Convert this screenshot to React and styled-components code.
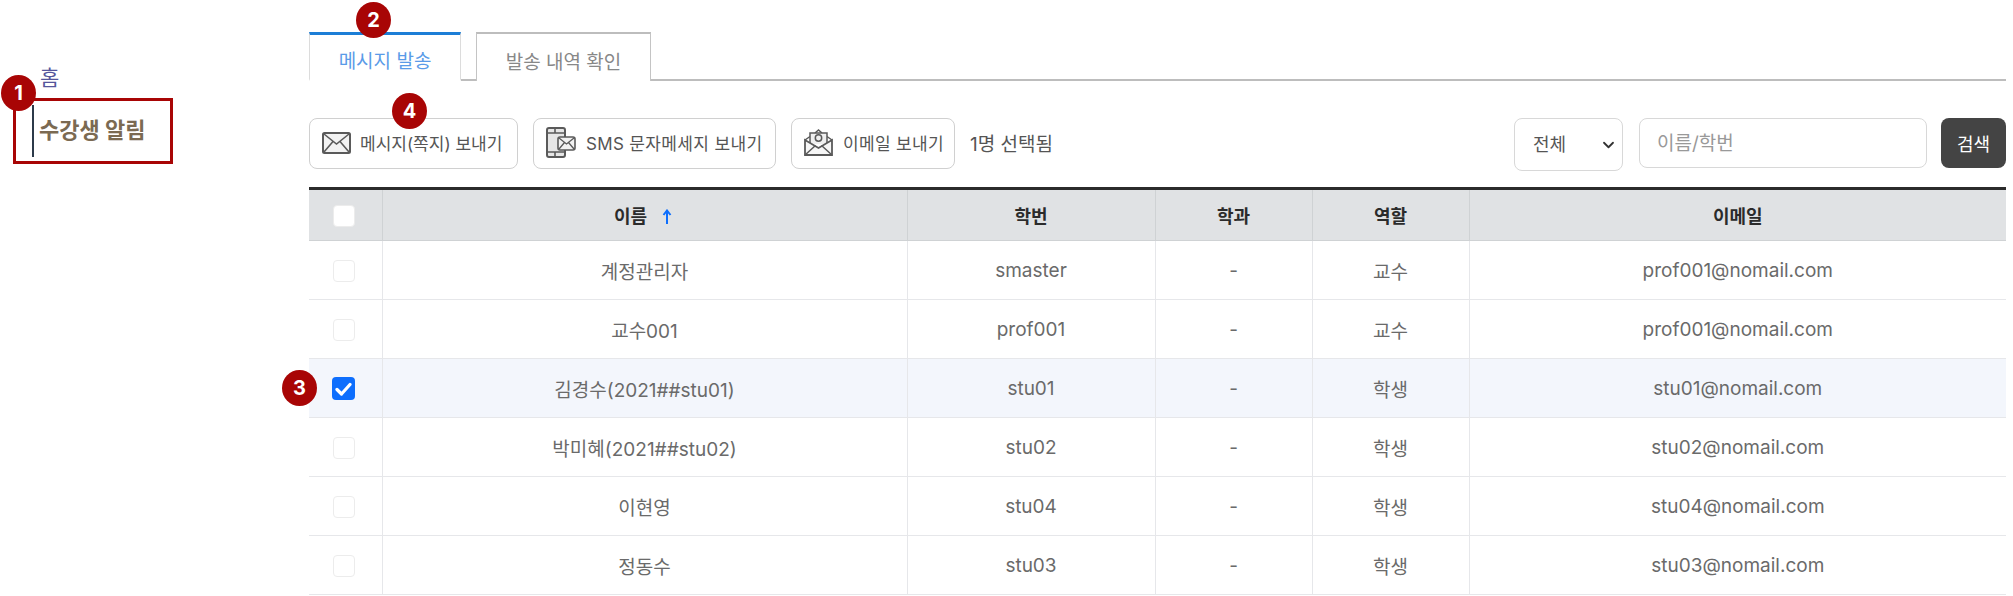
import React from 'react';
import styled, { createGlobalStyle } from 'styled-components';

const GlobalStyle = createGlobalStyle`
  html, body {
    margin: 0;
    padding: 0;
    background: #fff;
    overflow: hidden;
  }
  * { box-sizing: border-box; }
  body {
    font-family: Inter, 'Noto Sans CJK KR', sans-serif;
    color: #666;
  }
`;

const Page = styled.div`
  display: flex;
  width: 2013px;
  height: 596px;
  overflow: hidden;
`;

// Left navigation
const Sidebar = styled.nav`
  position: relative;
  width: 309px;
  flex: none;
  padding: 62px 0 0 13px;
`;

const HomeLink = styled.a`
  display: block;
  height: 36px;
  margin-left: 27px;
  font-size: 21px;
  line-height: 32px;
  color: #55559b;
`;

const ActiveItem = styled.div`
  display: flex;
  align-items: center;
  width: 160px;
  height: 66px;
  padding: 4px 0 4px 16px;
  border: 3px solid #a80505;
`;

const ActiveLabel = styled.span`
  display: block;
  height: 100%;
  padding-left: 5px;
  border-left: 2px solid #2c3a4a;
  font-size: 22px;
  font-weight: 700;
  line-height: 50px;
  color: #7b6a52;
  white-space: nowrap;
`;

const Badge = styled.span`
  position: absolute;
  left: ${p => p.$x}px;
  top: ${p => p.$y}px;
  z-index: 2;
  display: flex;
  align-items: center;
  justify-content: center;
  width: 35px;
  height: 36px;
  border-radius: 50%;
  background: #a80505;
  color: #fff;
  font-size: 20px;
  font-weight: 700;
`;

// Main column
const Main = styled.main`
  position: relative;
  flex: 1;
  min-width: 0;
  padding: 32px 7px 0 0;
`;

const Tabs = styled.div`
  display: flex;
  gap: 15px;
  height: 49px;
  border-bottom: 2px solid #bdbdbd;
`;

const Tab = styled.button`
  width: ${p => p.$width}px;
  height: 49px;
  padding: 5px 0 0;
  border: 1px solid ${p => (p.$active ? '#dcdcdc' : '#c4c4c4')};
  border-top: ${p => (p.$active ? '3px solid #1c7ed6' : '2px solid #bdbdbd')};
  border-bottom: ${p => (p.$active ? '2px solid #fff' : 'none')};
  background: #fff;
  font-family: inherit;
  font-size: 19px;
  color: ${p => (p.$active ? '#5a9be8' : '#888')};
`;

const Toolbar = styled.div`
  display: flex;
  align-items: flex-start;
  height: 53px;
  margin-top: 37px;
`;

const ToolButton = styled.button`
  display: flex;
  align-items: center;
  gap: ${p => p.$gap}px;
  width: ${p => p.$width}px;
  height: 51px;
  margin-right: 15px;
  padding: 0 0 2px ${p => p.$pad}px;
  border: 1px solid #d0d0d0;
  border-radius: 8px;
  background: #fff;
  font-family: inherit;
  font-size: 17px;
  letter-spacing: ${p => p.$tracking || 0}px;
  color: #555;
  white-space: nowrap;
`;

const SelectedCount = styled.span`
  font-size: 19px;
  line-height: 54px;
  color: #555;
`;

const SearchGroup = styled.div`
  display: flex;
  align-items: flex-start;
  margin-left: auto;
`;

const FilterSelect = styled.select`
  width: 109px;
  height: 53px;
  padding: 0 0 0 18px;
  border: 1px solid #d8d8d8;
  border-radius: 8px;
  appearance: none;
  background: #fff url("data:image/svg+xml,%3csvg xmlns='http://www.w3.org/2000/svg' viewBox='0 0 16 16'%3e%3cpath fill='none' stroke='%23333' stroke-linecap='round' stroke-linejoin='round' stroke-width='2.400' d='M2 5l6 6 6-6'/%3e%3c/svg%3e") no-repeat right 7px center / 13px 12px;
  font-family: inherit;
  font-size: 18px;
  color: #555;
`;

const SearchInput = styled.input`
  width: 288px;
  height: 50px;
  margin-left: 16px;
  padding: 0 17px;
  border: 1px solid #d8d8d8;
  border-radius: 8px;
  font-family: inherit;
  font-size: 19px;
  color: #555;
  &::placeholder { color: #999; }
`;

const SearchButton = styled.button`
  width: 65px;
  height: 50px;
  margin-left: 14px;
  padding: 0;
  border: none;
  border-radius: 8px;
  background: #444;
  color: #fff;
  font-family: inherit;
  font-size: 18px;
`;

const Table = styled.table`
  width: 1697px;
  margin-top: 16px;
  border-collapse: collapse;
  table-layout: fixed;
  border-top: 3px solid #2b2b2b;
`;

const HeadCell = styled.th`
  height: 52px;
  padding: 0;
  border-left: 1px solid #cfd2d4;
  border-bottom: 1px solid #cfd2d4;
  background: #e0e2e4;
  font-size: 18px;
  font-weight: 700;
  color: #2b2b2b;
  text-align: center;
  &:first-child { border-left: none; padding-right: 3px; }
`;

const Row = styled.tr`
  background: ${p => (p.$selected ? '#f3f6fc' : '#fff')};
`;

const Cell = styled.td`
  height: 59px;
  padding: 0;
  border-left: 1px solid #e6e7ea;
  border-bottom: 1px solid #e6e7ea;
  font-size: 19px;
  color: #6a6a6a;
  text-align: center;
  &:first-child { border-left: none; padding-right: 3px; }
`;

const CheckBox = styled.span`
  display: inline-flex;
  align-items: center;
  justify-content: center;
  vertical-align: middle;
  width: ${p => (p.$checked ? 23 : 22)}px;
  height: ${p => (p.$checked ? 23 : 22)}px;
  border: ${p => (p.$checked ? 'none' : '1px solid #ececec')};
  border-radius: 4px;
  background: ${p => (p.$checked ? '#0d6efd' : '#fff')};
`;

const SortArrow = styled.svg`
  width: 10px;
  height: 16px;
  margin: 0 3px 0 15px;
  vertical-align: -2px;
`;

const columns = [73, 525, 248, 157, 157, 537];

const users = [
  { name: '계정관리자', id: 'smaster', role: '교수', email: 'prof001@nomail.com' },
  { name: '교수001', id: 'prof001', role: '교수', email: 'prof001@nomail.com' },
  { name: '김경수(2021##stu01)', id: 'stu01', role: '학생', email: 'stu01@nomail.com', selected: true },
  { name: '박미혜(2021##stu02)', id: 'stu02', role: '학생', email: 'stu02@nomail.com' },
  { name: '이현영', id: 'stu04', role: '학생', email: 'stu04@nomail.com' },
  { name: '정동수', id: 'stu03', role: '학생', email: 'stu03@nomail.com' },
];

const MailIcon = () => (
  <svg width="29" height="22" viewBox="0 0 29 22" fill="#f2f2f2" stroke="#5a5a5a" strokeWidth="1.6">
    <rect x="1" y="1" width="27" height="20" rx="1.5" strokeWidth="2" />
    <path d="M2 2l12.5 10L27 2M2 20l9-10.5M27 20l-9-10.5" fill="none" />
  </svg>
);

const PhoneIcon = () => (
  <svg width="30" height="31" viewBox="0 0 30 31" fill="none" stroke="#5a5a5a">
    <rect x="1" y="1" width="18" height="29" rx="2" fill="#e6e6e6" strokeWidth="2" />
    <path d="M1 6h18M1 25h18M9 1.500v4M9 25v5" strokeWidth="1.6" />
    <rect x="12" y="10" width="17" height="13" rx="2" fill="#f2f2f2" strokeWidth="1.6" />
    <path d="M13 11l7.500 6 7.500-6M13 22l5.500-6.500M28 22l-5.500-6.500" strokeWidth="1.3" />
  </svg>
);

const OpenMailIcon = () => (
  <svg width="29" height="27" viewBox="0 0 29 27" fill="none" stroke="#5a5a5a">
    <path d="M1 11l5-3.500M28 11l-5-3.500M11 4l3.500-3 3.500 3" strokeWidth="1.5" />
    <path d="M6 15V4h17v11" fill="#f0f0f0" strokeWidth="1.5" />
    <circle cx="14.500" cy="9" r="3.200" strokeWidth="1.500" />
    <path d="M1 11v15h27V11L14.500 19z" fill="#f7f7f7" strokeWidth="1.800" />
    <path d="M1 26l10.500-9.500M28 26l-10.500-9.500" strokeWidth="1.500" />
  </svg>
);

const App = () => (
  <Page>
    <GlobalStyle />
    <Sidebar>
      <Badge $x={1} $y={75}>1</Badge>
      <HomeLink>홈</HomeLink>
      <ActiveItem>
        <ActiveLabel>수강생 알림</ActiveLabel>
      </ActiveItem>
    </Sidebar>

    <Main>
      <Badge $x={47} $y={2}>2</Badge>
      <Badge $x={83} $y={93}>4</Badge>
      <Badge $x={-27} $y={370}>3</Badge>

      <Tabs>
        <Tab $active $width={152}>메시지 발송</Tab>
        <Tab $width={175}>발송 내역 확인</Tab>
      </Tabs>

      <Toolbar>
        <ToolButton $width={209} $pad={12} $gap={9}><MailIcon />메시지(쪽지) 보내기</ToolButton>
        <ToolButton $width={243} $pad={12} $gap={10} $tracking={0.35}><PhoneIcon />SMS 문자메세지 보내기</ToolButton>
        <ToolButton $width={164} $pad={12} $gap={10} $tracking={0.35}><OpenMailIcon />이메일 보내기</ToolButton>
        <SelectedCount>1명 선택됨</SelectedCount>
        <SearchGroup>
          <FilterSelect defaultValue="전체">
            <option>전체</option>
          </FilterSelect>
          <SearchInput placeholder="이름/학번" />
          <SearchButton>검색</SearchButton>
        </SearchGroup>
      </Toolbar>

      <Table>
        <colgroup>
          {columns.map((width, i) => <col key={i} width={width} />)}
        </colgroup>
        <thead>
          <tr>
            <HeadCell><CheckBox /></HeadCell>
            <HeadCell>
              이름
              <SortArrow viewBox="0 0 10 16" fill="none" stroke="#0d6efd" strokeWidth="2">
                <path d="M5 15V2M1.500 6L5 1.500 8.500 6" />
              </SortArrow>
            </HeadCell>
            <HeadCell>학번</HeadCell>
            <HeadCell>학과</HeadCell>
            <HeadCell>역할</HeadCell>
            <HeadCell>이메일</HeadCell>
          </tr>
        </thead>
        <tbody>
          {users.map(user => (
            <Row key={user.id} $selected={user.selected}>
              <Cell>
                <CheckBox $checked={user.selected}>
                  {user.selected && (
                    <svg width="17" height="14" viewBox="0 0 17 14" fill="none" stroke="#fff" strokeWidth="3.200" strokeLinecap="round" strokeLinejoin="round">
                      <path d="M2 7.500l4.500 4.500L15 2.500" />
                    </svg>
                  )}
                </CheckBox>
              </Cell>
              <Cell>{user.name}</Cell>
              <Cell>{user.id}</Cell>
              <Cell>-</Cell>
              <Cell>{user.role}</Cell>
              <Cell>{user.email}</Cell>
            </Row>
          ))}
        </tbody>
      </Table>
    </Main>
  </Page>
);

export default App;
